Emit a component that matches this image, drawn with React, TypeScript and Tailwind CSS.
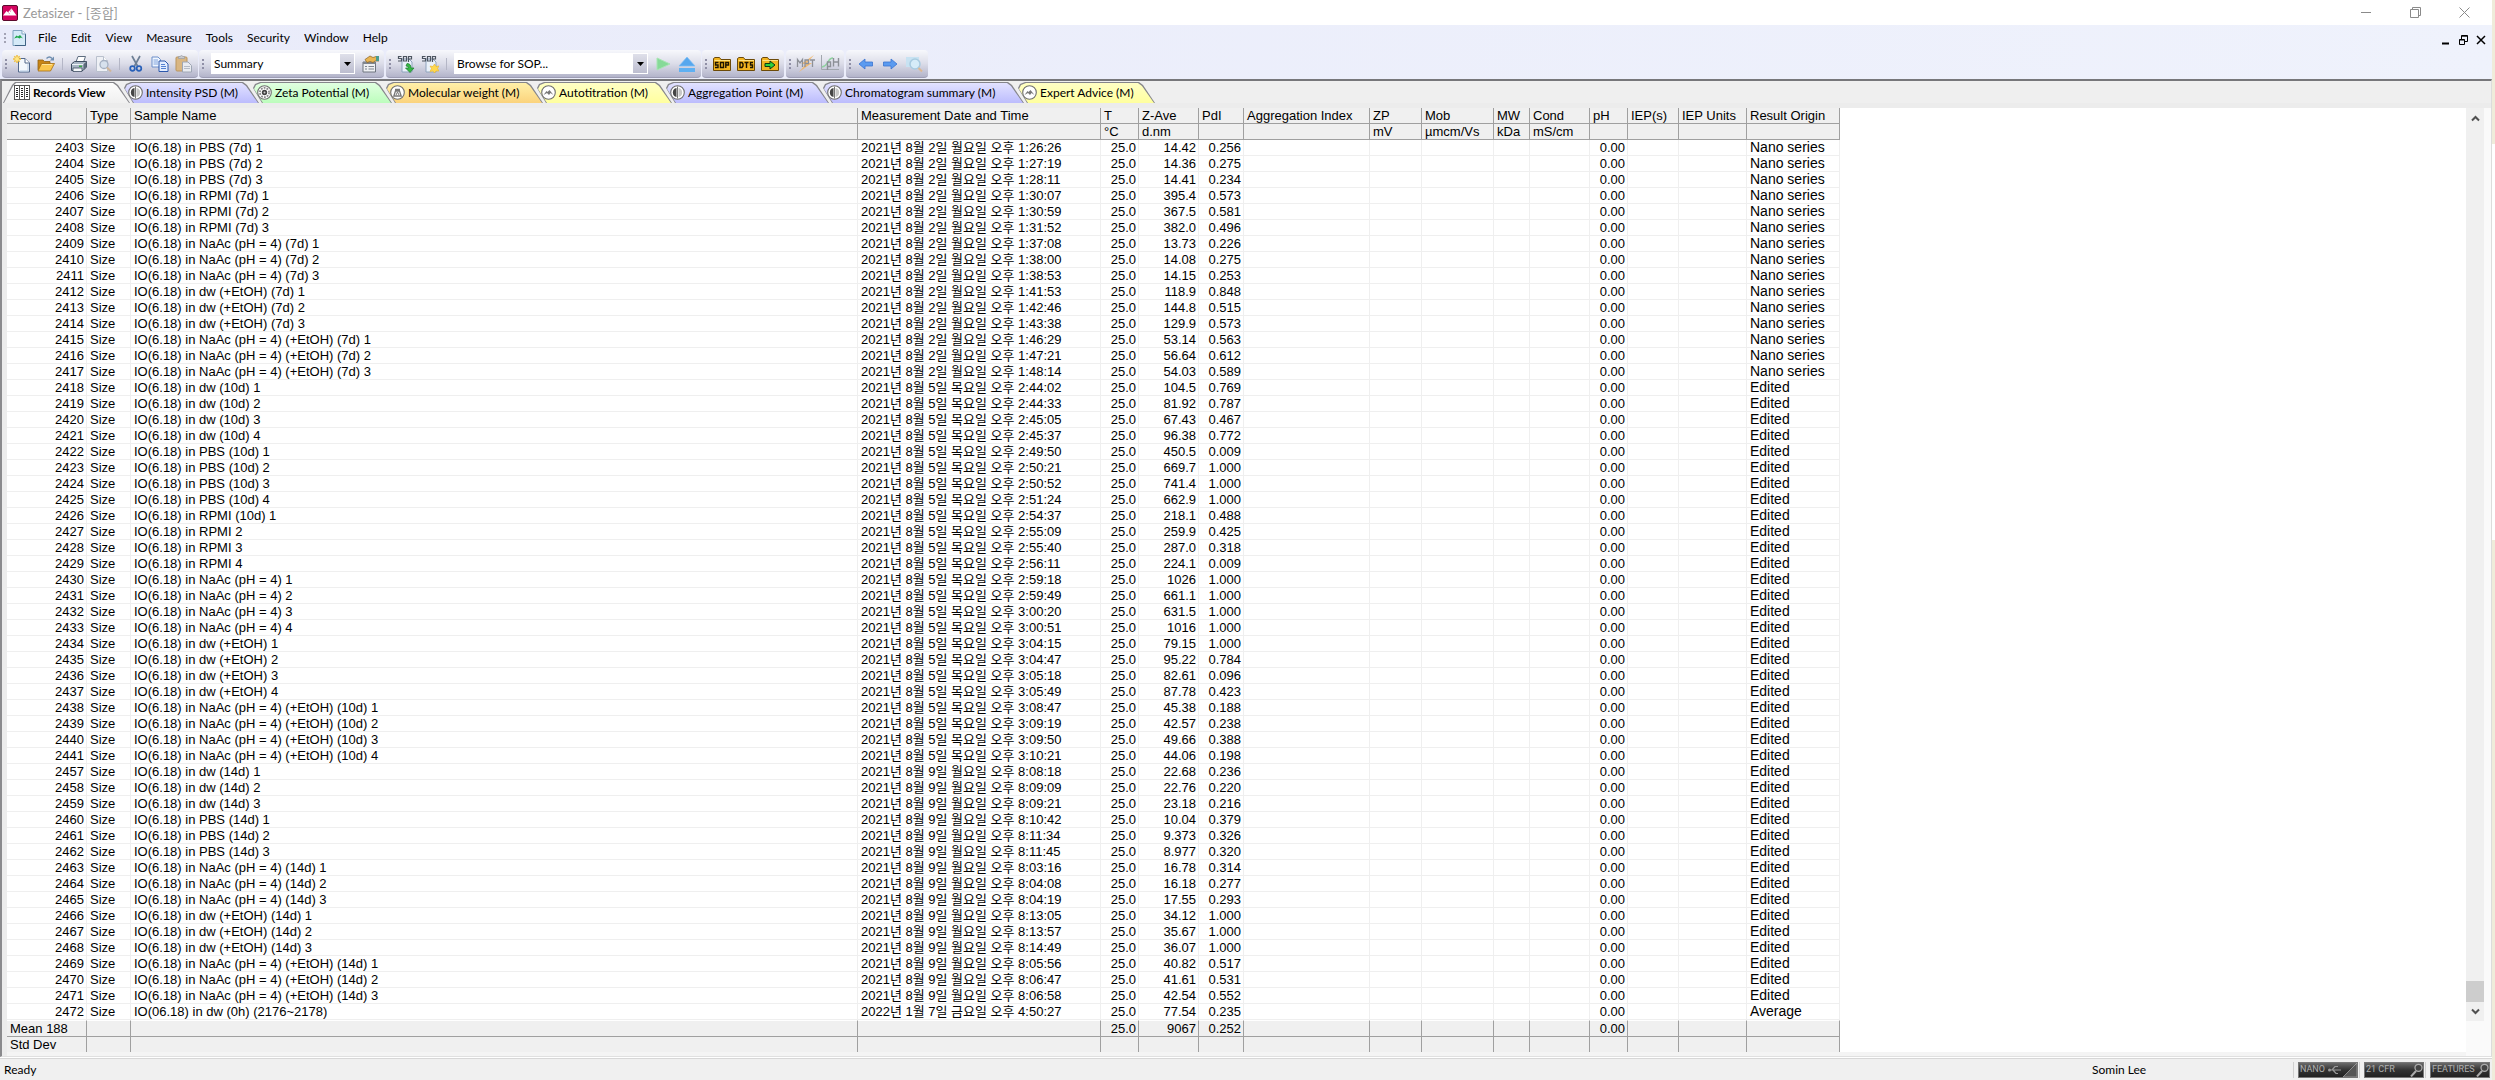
import React from "react";

const AUG2 = "2021년 8월 2일 월요일 오후 ";
const AUG5 = "2021년 8월 5일 목요일 오후 ";
const AUG9 = "2021년 8월 9일 월요일 오후 ";
const JAN7 = "2022년 1월 7일 금요일 오후 ";

type Row = [number, string, string, string, string, string];

const rows: Row[] = [
  [2403, "IO(6.18) in PBS (7d) 1", AUG2 + "1:26:26", "14.42", "0.256", "Nano series"],
  [2404, "IO(6.18) in PBS (7d) 2", AUG2 + "1:27:19", "14.36", "0.275", "Nano series"],
  [2405, "IO(6.18) in PBS (7d) 3", AUG2 + "1:28:11", "14.41", "0.234", "Nano series"],
  [2406, "IO(6.18) in RPMI (7d) 1", AUG2 + "1:30:07", "395.4", "0.573", "Nano series"],
  [2407, "IO(6.18) in RPMI (7d) 2", AUG2 + "1:30:59", "367.5", "0.581", "Nano series"],
  [2408, "IO(6.18) in RPMI (7d) 3", AUG2 + "1:31:52", "382.0", "0.496", "Nano series"],
  [2409, "IO(6.18) in NaAc (pH = 4) (7d) 1", AUG2 + "1:37:08", "13.73", "0.226", "Nano series"],
  [2410, "IO(6.18) in NaAc (pH = 4) (7d) 2", AUG2 + "1:38:00", "14.08", "0.275", "Nano series"],
  [2411, "IO(6.18) in NaAc (pH = 4) (7d) 3", AUG2 + "1:38:53", "14.15", "0.253", "Nano series"],
  [2412, "IO(6.18) in dw (+EtOH) (7d) 1", AUG2 + "1:41:53", "118.9", "0.848", "Nano series"],
  [2413, "IO(6.18) in dw (+EtOH) (7d) 2", AUG2 + "1:42:46", "144.8", "0.515", "Nano series"],
  [2414, "IO(6.18) in dw (+EtOH) (7d) 3", AUG2 + "1:43:38", "129.9", "0.573", "Nano series"],
  [2415, "IO(6.18) in NaAc (pH = 4) (+EtOH) (7d) 1", AUG2 + "1:46:29", "53.14", "0.563", "Nano series"],
  [2416, "IO(6.18) in NaAc (pH = 4) (+EtOH) (7d) 2", AUG2 + "1:47:21", "56.64", "0.612", "Nano series"],
  [2417, "IO(6.18) in NaAc (pH = 4) (+EtOH) (7d) 3", AUG2 + "1:48:14", "54.03", "0.589", "Nano series"],
  [2418, "IO(6.18) in dw (10d) 1", AUG5 + "2:44:02", "104.5", "0.769", "Edited"],
  [2419, "IO(6.18) in dw (10d) 2", AUG5 + "2:44:33", "81.92", "0.787", "Edited"],
  [2420, "IO(6.18) in dw (10d) 3", AUG5 + "2:45:05", "67.43", "0.467", "Edited"],
  [2421, "IO(6.18) in dw (10d) 4", AUG5 + "2:45:37", "96.38", "0.772", "Edited"],
  [2422, "IO(6.18) in PBS (10d) 1", AUG5 + "2:49:50", "450.5", "0.009", "Edited"],
  [2423, "IO(6.18) in PBS (10d) 2", AUG5 + "2:50:21", "669.7", "1.000", "Edited"],
  [2424, "IO(6.18) in PBS (10d) 3", AUG5 + "2:50:52", "741.4", "1.000", "Edited"],
  [2425, "IO(6.18) in PBS (10d) 4", AUG5 + "2:51:24", "662.9", "1.000", "Edited"],
  [2426, "IO(6.18) in RPMI (10d) 1", AUG5 + "2:54:37", "218.1", "0.488", "Edited"],
  [2427, "IO(6.18) in RPMI 2", AUG5 + "2:55:09", "259.9", "0.425", "Edited"],
  [2428, "IO(6.18) in RPMI 3", AUG5 + "2:55:40", "287.0", "0.318", "Edited"],
  [2429, "IO(6.18) in RPMI 4", AUG5 + "2:56:11", "224.1", "0.009", "Edited"],
  [2430, "IO(6.18) in NaAc (pH = 4) 1", AUG5 + "2:59:18", "1026", "1.000", "Edited"],
  [2431, "IO(6.18) in NaAc (pH = 4) 2", AUG5 + "2:59:49", "661.1", "1.000", "Edited"],
  [2432, "IO(6.18) in NaAc (pH = 4) 3", AUG5 + "3:00:20", "631.5", "1.000", "Edited"],
  [2433, "IO(6.18) in NaAc (pH = 4) 4", AUG5 + "3:00:51", "1016", "1.000", "Edited"],
  [2434, "IO(6.18) in dw (+EtOH) 1", AUG5 + "3:04:15", "79.15", "1.000", "Edited"],
  [2435, "IO(6.18) in dw (+EtOH) 2", AUG5 + "3:04:47", "95.22", "0.784", "Edited"],
  [2436, "IO(6.18) in dw (+EtOH) 3", AUG5 + "3:05:18", "82.61", "0.096", "Edited"],
  [2437, "IO(6.18) in dw (+EtOH) 4", AUG5 + "3:05:49", "87.78", "0.423", "Edited"],
  [2438, "IO(6.18) in NaAc (pH = 4) (+EtOH) (10d) 1", AUG5 + "3:08:47", "45.38", "0.188", "Edited"],
  [2439, "IO(6.18) in NaAc (pH = 4) (+EtOH) (10d) 2", AUG5 + "3:09:19", "42.57", "0.238", "Edited"],
  [2440, "IO(6.18) in NaAc (pH = 4) (+EtOH) (10d) 3", AUG5 + "3:09:50", "49.66", "0.388", "Edited"],
  [2441, "IO(6.18) in NaAc (pH = 4) (+EtOH) (10d) 4", AUG5 + "3:10:21", "44.06", "0.198", "Edited"],
  [2457, "IO(6.18) in dw (14d) 1", AUG9 + "8:08:18", "22.68", "0.236", "Edited"],
  [2458, "IO(6.18) in dw (14d) 2", AUG9 + "8:09:09", "22.76", "0.220", "Edited"],
  [2459, "IO(6.18) in dw (14d) 3", AUG9 + "8:09:21", "23.18", "0.216", "Edited"],
  [2460, "IO(6.18) in PBS (14d) 1", AUG9 + "8:10:42", "10.04", "0.379", "Edited"],
  [2461, "IO(6.18) in PBS (14d) 2", AUG9 + "8:11:34", "9.373", "0.326", "Edited"],
  [2462, "IO(6.18) in PBS (14d) 3", AUG9 + "8:11:45", "8.977", "0.320", "Edited"],
  [2463, "IO(6.18) in NaAc (pH = 4) (14d) 1", AUG9 + "8:03:16", "16.78", "0.314", "Edited"],
  [2464, "IO(6.18) in NaAc (pH = 4) (14d) 2", AUG9 + "8:04:08", "16.18", "0.277", "Edited"],
  [2465, "IO(6.18) in NaAc (pH = 4) (14d) 3", AUG9 + "8:04:19", "17.55", "0.293", "Edited"],
  [2466, "IO(6.18) in dw (+EtOH) (14d) 1", AUG9 + "8:13:05", "34.12", "1.000", "Edited"],
  [2467, "IO(6.18) in dw (+EtOH) (14d) 2", AUG9 + "8:13:57", "35.67", "1.000", "Edited"],
  [2468, "IO(6.18) in dw (+EtOH) (14d) 3", AUG9 + "8:14:49", "36.07", "1.000", "Edited"],
  [2469, "IO(6.18) in NaAc (pH = 4) (+EtOH) (14d) 1", AUG9 + "8:05:56", "40.82", "0.517", "Edited"],
  [2470, "IO(6.18) in NaAc (pH = 4) (+EtOH) (14d) 2", AUG9 + "8:06:47", "41.61", "0.531", "Edited"],
  [2471, "IO(6.18) in NaAc (pH = 4) (+EtOH) (14d) 3", AUG9 + "8:06:58", "42.54", "0.552", "Edited"],
  [2472, "IO(06.18) in dw (0h) (2176~2178)", JAN7 + "4:50:27", "77.54", "0.235", "Average"],
];

const columns = [
  { title: "Record", unit: "", width: "w-[80px]" },
  { title: "Type", unit: "", width: "w-[44px]" },
  { title: "Sample Name", unit: "", width: "w-[727px]" },
  { title: "Measurement Date and Time", unit: "", width: "w-[243px]" },
  { title: "T", unit: "°C", width: "w-[38px]" },
  { title: "Z-Ave", unit: "d.nm", width: "w-[60px]" },
  { title: "PdI", unit: "", width: "w-[45px]" },
  { title: "Aggregation Index", unit: "", width: "w-[126px]" },
  { title: "ZP", unit: "mV", width: "w-[52px]" },
  { title: "Mob", unit: "µmcm/Vs", width: "w-[72px]" },
  { title: "MW", unit: "kDa", width: "w-[36px]" },
  { title: "Cond", unit: "mS/cm", width: "w-[60px]" },
  { title: "pH", unit: "", width: "w-[38px]" },
  { title: "IEP(s)", unit: "", width: "w-[51px]" },
  { title: "IEP Units", unit: "", width: "w-[68px]" },
  { title: "Result Origin", unit: "", width: "w-[93px]" },
];

const numeric = [0, 4, 5, 6, 12];

/* ---------- icons ---------- */

function Svg({ children, size = 18 }: { children: React.ReactNode; size?: number }) {
  return (
    <svg width={size} height={size} viewBox="0 0 18 18" aria-hidden="true" className="shrink-0">
      {children}
    </svg>
  );
}

const AppLogo = () => (
  <svg width="16" height="16" viewBox="0 0 16 16" aria-hidden="true" className="shrink-0">
    <rect x=".5" y=".5" width="15" height="15" rx="1.5" fill="#d3045f" stroke="#5c0a2d" />
    <path d="M1 10.5 4.5 6 6 7.3 9.5 3.5 14.5 10.5Z" fill="#fff" />
    <path d="M6 7.3 8 9M9.5 3.5 8.3 7" stroke="#e67aa9" strokeWidth=".7" />
  </svg>
);

const DocLogo = () => (
  <svg width="14" height="16" viewBox="0 0 14 16" aria-hidden="true" className="shrink-0">
    <path d="M1 .5H10L13.5 4V15.5H1Z" fill="#d5eaf8" stroke="#7fa3c0" />
    <path d="M13.5 4V15.5H3" fill="none" stroke="#3f6384" />
    <path d="M10 .5V4H13.5" fill="#fff" stroke="#7fa3c0" />
    <path d="M2 8.5 4.5 5.5 6 6.5 8 5 11 8.5 9 7.5 7.5 8.5 5.5 7.5Z" fill="#1fa84b" />
  </svg>
);

const NewIcon = () => (
  <Svg>
    <path d="M5.5 3.5H12L16.5 8V17H5.5Z" fill="#f4f8fd" stroke="#53698c" />
    <path d="M12 3.500V8H16.500" fill="#fff" stroke="#53698c" />
    <path d="M15 9V16H7" fill="none" stroke="#b7cbe4" />
    <path d="M4 0V8M0 4H8M1.300 1.300 6.700 6.700M6.700 1.300 1.300 6.700" stroke="#f0bf3a" strokeWidth="1.500" />
    <circle cx="4" cy="4" r="2" fill="#ffe785" />
  </Svg>
);

const OpenIcon = () => (
  <Svg>
    <path d="M1 15V5H6L7.500 6.500H13V9" fill="#c98516" stroke="#8f5f14" strokeWidth=".8" />
    <path d="M1 16 4.500 8.500H17.500L13.500 16Z" fill="#fbc64d" stroke="#a46c12" strokeWidth=".8" />
    <path d="M5 9.500H15" stroke="#ffe49a" />
    <path d="M9.500 3.500Q12.500 .5 15 3.500" fill="none" stroke="#6f8eb0" strokeWidth="1.400" />
    <path d="M17 1.500V5.500H12.800Z" fill="#6f8eb0" />
  </Svg>
);

const PrintIcon = () => (
  <Svg>
    <path d="M6 7 8 1.500H15.500L13.500 7" fill="#fff" stroke="#5d6d80" />
    <path d="M1.500 9 4.500 6.500H16.500V12L13 15.500H1.500Z" fill="#a9b6c5" stroke="#3e4d60" />
    <path d="M2 9.500H13L16 7" fill="none" stroke="#eef3f8" />
    <path d="M13.500 9V15L16.500 12V6.500Z" fill="#5d6b7c" />
    <path d="M3 13H12V16.500H3Z" fill="#f4f7fa" stroke="#3e4d60" strokeWidth=".8" />
    <rect x="9" y="10.500" width="3" height="1.500" fill="#3aa845" />
  </Svg>
);

const PreviewIcon = () => (
  <Svg>
    <path d="M2.500 1.500H9.500L13.500 5.500V16.500H2.500Z" fill="#eef0f5" stroke="#b9c0cd" />
    <path d="M9.500 1.500V5.500H13.500" fill="#fff" stroke="#b9c0cd" />
    <circle cx="10" cy="9.500" r="4" fill="#d7e1ed" stroke="#a5b0c2" strokeWidth="1.300" />
    <path d="M13 12.500 17 16.500" stroke="#cfb69b" strokeWidth="2" />
  </Svg>
);

const CutIcon = () => (
  <Svg>
    <path d="M5 1 10.500 11M13 1 7.500 11" stroke="#6d7f95" strokeWidth="1.700" />
    <circle cx="5.500" cy="13.500" r="2.300" fill="none" stroke="#2860b8" strokeWidth="1.700" />
    <circle cx="12" cy="13.500" r="2.300" fill="none" stroke="#2860b8" strokeWidth="1.700" />
  </Svg>
);

const CopyIcon = () => (
  <Svg>
    <path d="M1 2H7L9.500 4.500V12H1Z" fill="#f0f6ff" stroke="#6c8fca" />
    <path d="M2.500 5H7M2.500 7H7M2.500 9H7" stroke="#7ea2dc" />
    <path d="M8 6H14L17 9V16.500H8Z" fill="#e4eeff" stroke="#2d58ac" />
    <path d="M10 9.500H14M10 11.500H15M10 13.500H15" stroke="#5582d2" />
  </Svg>
);

const PasteIcon = () => (
  <Svg>
    <rect x="1" y="2" width="11" height="14" rx="1" fill="#d9b682" stroke="#b99560" />
    <path d="M3.500 3.500H9.500V1.500H8L6.500 .5 5 1.500H3.500Z" fill="#c7c9ce" stroke="#9a9ca3" strokeWidth=".7" />
    <path d="M7.500 7H13L16.500 10.500V17H7.500Z" fill="#e9ebf0" stroke="#9ea6b4" />
    <path d="M9 11.500H15M9 13.500H15" stroke="#b5bbc6" />
  </Svg>
);

const PropsIcon = () => (
  <Svg>
    <path d="M2 7H14.500V17H2Z" fill="#eef0f3" stroke="#6e747e" />
    <path d="M2 7H14.500V9H2Z" fill="#80868f" />
    <path d="M4 11.500H6M4 14H6M7.500 11.500H13M7.500 14H13" stroke="#7f858f" />
    <path d="M4 4.500 9 1 12 2.500 15 1.500H18V6H14L12 7.500 9 6.500 6 7.500Z" fill="#e9b552" stroke="#8a6320" strokeWidth=".7" />
    <rect x="15" y="1" width="3" height="5" fill="#4a9b8f" />
  </Svg>
);

const SopDoc = ({ star }: { star?: boolean }) => (
  <Svg>
    <path d="M5 4H12L15 7V17H5Z" fill="#eaf1fa" stroke="#8fa3bd" />
    <path d="M4.500 1.500H1.500V3.500H4.500V6H1M6.500 1.500H9.500V6H6.500ZM11.500 7V1.500H14.500V4H12" stroke="#4c5560" strokeWidth="1.200" fill="none" />
    {star ? (
      <path d="M13.500 9 15 11.500 18 11 16.500 13.500 18 16 15 16 13.500 18 12 16 9 16.500 10.500 13.500 9 11 12 11.500Z" fill="#ffd84f" stroke="#e6b52d" strokeWidth=".6" />
    ) : (
      <path d="M10 8.500Q14 8.500 14 13H17L13 17.500 8.500 13H11.500Q11.500 11 9 11Z" fill="#35b845" stroke="#1c7c2b" strokeWidth=".7" />
    )}
  </Svg>
);

const PlayIcon = () => (
  <Svg>
    <path d="M3 3 16 9 3 15Z" fill="#86da98" stroke="#a8e5b4" strokeLinejoin="round" />
  </Svg>
);

const EjectIcon = () => (
  <Svg>
    <path d="M9 2 17 11H1Z" fill="#56a7ee" stroke="#7fc0f5" strokeWidth=".7" />
    <rect x="1" y="13" width="16" height="4" fill="#5fb0f2" />
  </Svg>
);

const Folder = ({ children }: { children: React.ReactNode }) => (
  <Svg>
    <path d="M.5 15.500V3.500L2 2.500H6.500L8 4.500H17.500V15.500Z" fill="#f2b41f" stroke="#6c4a08" />
    <path d="M1.500 5.500H17" stroke="#ffe07a" />
    {children}
  </Svg>
);

const SopFolder = () => (
  <Folder>
    <path d="M5.500 7.500H2.500V10H5V12.500H2M7.500 7.500H10.500V12.500H7.500ZM12.800 13V7.500H15.500V10H13" fill="none" stroke="#1d1500" strokeWidth="1.400" />
  </Folder>
);
const DtsFolder = () => (
  <Folder>
    <path d="M3 7.500V12.500H5L6 11V9L5 7.500ZM7.500 7.500H11.500M9.500 7.500V13M16 7.500H13.500V10H15.500V12.500H13" fill="none" stroke="#1d1500" strokeWidth="1.400" />
  </Folder>
);
const ArrowFolder = () => (
  <Folder>
    <path d="M4 8.500H9V6L14 10 9 14V11.500H4Z" fill="#2fd23d" stroke="#0d3d10" />
  </Folder>
);

const MptIcon = () => (
  <svg width="20" height="18" viewBox="0 0 20 18" aria-hidden="true">
    <path d="M18 0 5 9H10L3 17 16 8H11Z" fill="#f7b55e" opacity=".85" />
    <path d="M1.500 12V4.500L4 8 6.500 4.500V12M9 12V5H12.500V8.500H9M14 5H19M16.500 5V12" fill="none" stroke="#8d9097" strokeWidth="1.300" />
  </svg>
);

const PhIcon = () => (
  <svg width="20" height="18" viewBox="0 0 20 18" aria-hidden="true">
    <path d="M1.500 0V14.500H19" fill="none" stroke="#a2a7ae" />
    <path d="M2 12Q6 11 8 7T13 3" fill="none" stroke="#8fd29f" strokeWidth="1.600" />
    <path d="M7.500 15V7H10.500V11.500H7.500M13.500 11.500V3M18.500 11.500V3M13.500 7H18.500" fill="none" stroke="#8d9097" strokeWidth="1.400" />
  </svg>
);

const BackIcon = () => (
  <Svg>
    <path d="M2 9 8 4V7H15.500V11H8V14Z" fill="#5b9bf0" stroke="#3a73d0" strokeWidth=".8" strokeLinejoin="round" />
  </Svg>
);
const ForwardIcon = () => (
  <Svg>
    <path d="M16 9 10 4V7H2.500V11H10V14Z" fill="#5b9bf0" stroke="#3a73d0" strokeWidth=".8" strokeLinejoin="round" />
  </Svg>
);
const FindIcon = () => (
  <Svg>
    <rect x="1" y="2" width="13" height="10" fill="#c8e2f2" />
    <circle cx="10" cy="9" r="5" fill="#d6ecf8" stroke="#a8cbe0" strokeWidth="1.500" />
    <path d="M13.500 13 17 16.500" stroke="#dcb893" strokeWidth="2" />
  </Svg>
);

const GridIcon = () => (
  <svg width="16" height="15" viewBox="0 0 16 15" aria-hidden="true" className="shrink-0">
    <rect x=".5" y=".5" width="15" height="14" fill="#fff" stroke="#555" />
    <path d="M5.500 0V15M10.500 0V15" stroke="#555" />
    <path d="M2 3.500H4M2 5.500H4M2 7.500H4M2 9.500H4M2 11.500H4M7 3.500H9M7 5.500H9M7 7.500H9M7 9.500H9M7 11.500H9M12 3.500H14M12 5.500H14M12 7.500H14M12 9.500H14M12 11.500H14" stroke="#222" />
  </svg>
);

const Disc = ({ children }: { children: React.ReactNode }) => (
  <svg width="15" height="15" viewBox="0 0 15 15" aria-hidden="true" className="shrink-0">
    <circle cx="7.500" cy="7.500" r="6.800" fill="#fff" stroke="#6f6f6f" strokeWidth="1.100" />
    {children}
  </svg>
);
const HalfDisc = () => (
  <Disc>
    <path d="M6.500 3A4.600 4.600 0 0 0 6.500 12Z" fill="#444" />
    <path d="M8.500 3A4.600 4.600 0 0 1 8.500 12Z" fill="#c9c9c9" />
    <path d="M7.500 1.500V13.500" stroke="#777" />
  </Disc>
);
const ZetaDisc = () => (
  <Disc>
    <circle cx="7.500" cy="7.500" r="4.600" fill="none" stroke="#8a8a8a" strokeWidth="1.800" strokeDasharray="1.800 1.100" />
    <circle cx="7.500" cy="7.500" r="2.700" fill="#444" />
    <circle cx="7.500" cy="7.500" r="1" fill="#ccc" />
  </Disc>
);
const WeightDisc = () => (
  <Disc>
    <path d="M5 4.500H10M3.800 11H11.200L9.500 6H5.500Z" fill="none" stroke="#777" strokeWidth="1.300" />
    <path d="M6 10 7.500 7 9 10" fill="none" stroke="#777" />
  </Disc>
);
const HillDisc = () => (
  <Disc>
    <path d="M2.500 10 5.500 6 6.500 7 8.500 5 12.500 10 9.500 8 8 10 6 8Z" fill="#777" />
  </Disc>
);

/* ---------- toolbar ---------- */

function Group({ children, label, className = "" }: { children: React.ReactNode; label: string; className?: string }) {
  return (
    <div
      role="toolbar"
      aria-label={label}
      className={
        "flex h-7 items-center rounded-sm border-b border-[#9c9cb4] bg-linear-to-b from-[#f7f8fc] via-[#dcdde9] to-[#b3b4ca] pr-0.5 " +
        className
      }
    >
      <span className="flex w-2 shrink-0 flex-col items-center gap-0.5">
        <span className="size-0.5 bg-[#8f8fa6]" />
        <span className="size-0.5 bg-[#8f8fa6]" />
        <span className="size-0.5 bg-[#8f8fa6]" />
      </span>
      {children}
    </div>
  );
}

const Tool = ({ label, children }: { label: string; children: React.ReactNode }) => (
  <button type="button" aria-label={label} className="flex size-6 shrink-0 items-center justify-center">
    {children}
  </button>
);

const Sep = () => (
  <span className="flex w-[9px] shrink-0 justify-center">
    <span className="h-3 w-px bg-[#b4b6c6]" />
  </span>
);

function Combo({ label, value, className }: { label: string; value: string; className: string }) {
  return (
    <div className={"relative h-[21px] shrink-0 bg-white " + className}>
      <select aria-label={label} className="block h-full w-full appearance-none bg-transparent pl-[3px] text-xs text-black outline-none">
        <option>{value}</option>
      </select>
      <span className="pointer-events-none absolute inset-y-px right-px flex w-[14px] items-center justify-center bg-linear-to-b from-[#dfe0ea] to-[#bcbdcf]">
        <svg width="7" height="4" viewBox="0 0 7 4" aria-hidden="true">
          <path d="M0 0H7L3.500 4Z" fill="#000" />
        </svg>
      </span>
    </div>
  );
}

/* ---------- tabs ---------- */

const tabs = [
  { label: "Intensity PSD (M)", icon: <HalfDisc />, box: "z-[7] w-[137px]", fill: "from-[#e2e2ff] to-[#bcbcfd]" },
  { label: "Zeta Potential (M)", icon: <ZetaDisc />, box: "z-[6] w-[141px]", fill: "from-[#e0ffe0] to-[#bcfdbc]" },
  { label: "Molecular weight (M)", icon: <WeightDisc />, box: "z-[5] w-[159px]", fill: "from-[#fff0a8] to-[#fbd37c]" },
  { label: "Autotitration (M)", icon: <HillDisc />, box: "z-[4] w-[137px]", fill: "from-[#ffffc4] to-[#ffff9e]" },
  { label: "Aggregation Point (M)", icon: <HalfDisc />, box: "z-[3] w-[165px]", fill: "from-[#e2e2ff] to-[#bcbcfd]" },
  { label: "Chromatogram summary (M)", icon: <HalfDisc />, box: "z-[2] w-[203px]", fill: "from-[#e2e2ff] to-[#bcbcfd]" },
  { label: "Expert Advice (M)", icon: <HillDisc />, box: "z-[1] w-[139px]", fill: "from-[#ffffc4] to-[#ffff9e]" },
];

const TAB_CLIP =
  "[clip-path:polygon(9px_0,calc(100%-16px)_0,calc(100%-12px)_3px,100%_100%,11px_100%,2px_6px,4px_2px)]";
const FIRST_CLIP = "[clip-path:polygon(12px_0,calc(100%-16px)_0,calc(100%-12px)_3px,100%_100%,0_100%,9px_3px)]";

function TabShape({ clip, fill }: { clip: string; fill: string }) {
  return (
    <span className={"absolute inset-0 bg-[#85858a] " + clip}>
      <span className={"absolute inset-x-px top-px bottom-0 bg-linear-to-b " + fill + " " + clip} />
    </span>
  );
}

/* ---------- status badges ---------- */

const Badge = ({ text, children }: { text: string; children: React.ReactNode }) => (
  <div className="flex items-center border-l border-[#d0d0d0] pl-1">
    <div className="flex h-4 w-[60px] items-center justify-between overflow-hidden border border-[#777] bg-linear-to-b from-[#6a6a6a] via-[#333] to-[#222] pl-px font-['Roboto',sans-serif] text-[9px] leading-none text-[#b0b0b0]">
      <span>{text}</span>
      {children}
    </div>
  </div>
);

const KeyIcon = () => (
  <svg width="13" height="14" viewBox="0 0 13 14" aria-hidden="true" className="shrink-0">
    <path d="M1 13.500 6 8" stroke="#aaa" strokeWidth="2" />
    <circle cx="8.500" cy="4.800" r="3.500" fill="#444" stroke="#aaa" strokeWidth="1.300" />
  </svg>
);

const UsbIcon = () => (
  <svg width="30" height="14" viewBox="0 0 30 14" aria-hidden="true" className="shrink-0">
    <path d="M2 7H14M5 7 8 3.500H11M6 7 9 10.500H11" fill="none" stroke="#999" strokeWidth="1.200" />
    <circle cx="2.500" cy="7" r="1.500" fill="#999" />
    <path d="M16 14 30 0V14Z" fill="#555" stroke="#aaa" strokeWidth=".7" />
  </svg>
);

function bodyCell(row: Row, index: number) {
  switch (index) {
    case 0: return row[0];
    case 1: return "Size";
    case 2: return row[1];
    case 3: return row[2];
    case 4: return "25.0";
    case 5: return row[3];
    case 6: return row[4];
    case 12: return "0.00";
    case 15: return row[5];
    default: return "";
  }
}

const means: Record<number, string> = { 0: "Mean 188", 4: "25.0", 5: "9067", 6: "0.252", 12: "0.00" };

const align = (i: number) => (numeric.includes(i) ? "text-right pr-0.5 pl-0" : "text-left pl-[3px] pr-0");

export default function App() {
  return (
    <div className="flex min-h-screen bg-white font-['Lato','Noto_Sans_CJK_KR',sans-serif] text-xs text-black">
      <div className="flex min-w-0 flex-1 flex-col bg-[#f0f0f0]">
        {/* title bar */}
        <header className="flex h-[25px] items-center bg-white pl-0.5">
          <AppLogo />
          <h1 className="pl-[5px] text-[13px] leading-4 text-[#999]">Zetasizer - [종합]</h1>
          <div className="mr-[3px] ml-auto flex text-[#8a8a8a]">
            <button type="button" aria-label="Minimize" className="flex h-6 w-[49px] items-center justify-center">
              <svg width="11" height="11" viewBox="0 0 11 11"><path d="M0 5.500H10" stroke="currentColor" /></svg>
            </button>
            <button type="button" aria-label="Restore" className="flex h-6 w-[49px] items-center justify-center">
              <svg width="11" height="11" viewBox="0 0 11 11" fill="none" stroke="currentColor"><path d="M.5 2.500H8.500V10.500H.5ZM2.500 2.500V.5H10.500V8.500H8.500" /></svg>
            </button>
            <button type="button" aria-label="Close" className="flex h-6 w-[49px] items-center justify-center">
              <svg width="11" height="11" viewBox="0 0 11 11" stroke="currentColor"><path d="M.5 .5 10.500 10.500M10.500 .5 .5 10.500" /></svg>
            </button>
          </div>
        </header>

        {/* menu bar */}
        <nav aria-label="Menu" className="flex h-[25px] items-center bg-linear-to-r from-[#e9ebfa] to-[#eff2fc] pl-1">
          <span className="flex w-0.5 flex-col gap-0.5">
            <span className="size-0.5 bg-[#a3a3b5]" />
            <span className="size-0.5 bg-[#a3a3b5]" />
            <span className="size-0.5 bg-[#a3a3b5]" />
          </span>
          <span className="pr-[5px] pl-1.5"><DocLogo /></span>
          {["File", "Edit", "View", "Measure", "Tools", "Security", "Window", "Help"].map((item) => (
            <button key={item} type="button" className="px-[7px] leading-4">{item}</button>
          ))}
          <div className="mr-[2px] ml-auto flex pt-1">
            <button type="button" aria-label="Minimize document" className="flex w-[18px] justify-center">
              <svg width="9" height="10" viewBox="0 0 9 10"><path d="M1 8.500H8" stroke="#000" strokeWidth="2" /></svg>
            </button>
            <button type="button" aria-label="Restore document" className="flex w-[18px] justify-center">
              <svg width="9" height="10" viewBox="0 0 9 10" fill="none" stroke="#000"><path d="M.5 4.500H5.500V9.500H.5ZM.5 5H5.500M2.500 4.500V.5H8.500V6.500H5.500M2.500 1.200H8.500" /></svg>
            </button>
            <button type="button" aria-label="Close document" className="flex w-[18px] justify-center">
              <svg width="10" height="10" viewBox="0 0 10 10"><path d="M1 1 9 9M9 1 1 9" stroke="#000" strokeWidth="1.500" /></svg>
            </button>
          </div>
        </nav>

        {/* toolbars */}
        <div className="flex h-[29px] items-start bg-linear-to-r from-[#e9ebfa] to-[#eff2fc] pl-0.5">
          <Group label="Standard">
            <Tool label="New"><NewIcon /></Tool>
            <Tool label="Open"><OpenIcon /></Tool>
            <Sep />
            <Tool label="Print"><PrintIcon /></Tool>
            <Tool label="Print preview"><PreviewIcon /></Tool>
            <Sep />
            <Tool label="Cut"><CutIcon /></Tool>
            <Tool label="Copy"><CopyIcon /></Tool>
            <Tool label="Paste"><PasteIcon /></Tool>
          </Group>
          <Group label="Workspace" className="ml-px">
            <Combo label="Workspace" value="Summary" className="ml-1 mr-[3px] w-36" />
            <Tool label="Workspace settings"><PropsIcon /></Tool>
          </Group>
          <Group label="SOP" className="ml-0.5">
            <Tool label="Edit SOP"><SopDoc /></Tool>
            <Tool label="New SOP"><SopDoc star /></Tool>
            <Sep />
            <Combo label="SOP" value="Browse for SOP..." className="mx-[3px] w-[194px]" />
            <Tool label="Start"><PlayIcon /></Tool>
            <Tool label="Eject"><EjectIcon /></Tool>
          </Group>
          <Group label="Folders" className="ml-px">
            <Tool label="SOP folder"><SopFolder /></Tool>
            <Tool label="DTS folder"><DtsFolder /></Tool>
            <Tool label="Export folder"><ArrowFolder /></Tool>
          </Group>
          <Group label="Titrator" className="ml-0.5">
            <Tool label="MPT"><MptIcon /></Tool>
            <Tool label="pH"><PhIcon /></Tool>
          </Group>
          <Group label="Navigate" className="ml-0.5">
            <Tool label="Previous"><BackIcon /></Tool>
            <Tool label="Next"><ForwardIcon /></Tool>
            <Tool label="Find"><FindIcon /></Tool>
          </Group>
        </div>

        {/* document window */}
        <main className="flex flex-1 flex-col border-t-2 border-r border-b border-l-2 border-t-[#77777a] border-r-[#dcdcdc] border-b-[#e0e0e0] border-l-[#8a8a8d] pt-px">
          <div role="tablist" className="flex h-[21px] bg-[#efefef] pl-px text-xs">
            <button role="tab" aria-selected="true" type="button" className="relative z-[8] w-[127px]">
              <TabShape clip={FIRST_CLIP} fill="from-[#fdfdfd] to-[#f0f0f0]" />
              <span className="relative flex items-center gap-[3px] pl-[11px] font-bold"><GridIcon />Records View</span>
            </button>
            {tabs.map((tab) => (
              <button key={tab.label} role="tab" aria-selected="false" type="button" className={"relative -ml-2 " + tab.box}>
                <TabShape clip={TAB_CLIP} fill={tab.fill} />
                <span className="relative flex items-center gap-[3px] pl-1.5 whitespace-nowrap">{tab.icon}{tab.label}</span>
              </button>
            ))}
          </div>

          <div className="flex flex-1 bg-[#ececec] pt-[5px] pl-[5px]">
            <div className="min-w-0 flex-1 bg-white">
              <table className="w-[1833px] table-fixed border-separate border-spacing-0 font-['Liberation_Sans','Noto_Sans_CJK_KR',sans-serif] text-[13px] leading-[15px] whitespace-nowrap">
                <colgroup>
                  {columns.map((c) => <col key={c.title} className={c.width} />)}
                </colgroup>
                <thead className="bg-[#f0f0f0]">
                  <tr>
                    {columns.map((c) => (
                      <th key={c.title} scope="col" className="h-4 overflow-hidden border-r border-b border-[#a0a0a0] py-0 pr-0 pl-[3px] text-left font-normal">{c.title}</th>
                    ))}
                  </tr>
                  <tr>
                    {columns.map((c) => (
                      <td key={c.title} className="h-4 overflow-hidden border-r border-b border-[#a0a0a0] py-0 pr-0 pl-[3px]">{c.unit}</td>
                    ))}
                  </tr>
                </thead>
                <tbody>
                  {rows.map((row) => (
                    <tr key={row[0]}>
                      {columns.map((c, i) => (
                        <td key={c.title} className={"h-4 overflow-hidden border-r border-b border-[#efefef] py-0 " + (i === 15 ? "text-sm leading-[15px] " : "") + align(i)}>
                          {bodyCell(row, i)}
                        </td>
                      ))}
                    </tr>
                  ))}
                </tbody>
                <tfoot>
                  <tr>
                    {columns.map((c, i) => (
                      <td key={c.title} className={"h-[17px] overflow-hidden border-t border-r border-b border-[#a0a0a0] border-t-white bg-[#f0f0f0] py-0 " + (i === 0 ? "pl-[3px]" : align(i))}>
                        {means[i]}
                      </td>
                    ))}
                  </tr>
                  <tr>
                    {columns.map((c, i) => (
                      <td key={c.title} className="h-[15px] overflow-hidden border-r border-[#a0a0a0] bg-[#f0f0f0] py-0 pl-[3px]">
                        {i === 0 ? "Std Dev" : ""}
                      </td>
                    ))}
                  </tr>
                </tfoot>
              </table>
              <div className="h-1 bg-[#f4f4f4]" />
            </div>
            <div className="flex flex-col bg-[#fafafa] pr-[7px] pb-[35px]">
              <div className="flex w-[18px] flex-1 flex-col items-center bg-[#f0f0f0]">
                <button type="button" aria-label="Scroll up" className="flex h-5 w-full items-center justify-center">
                  <svg width="9" height="7" viewBox="0 0 9 7"><path d="M1 5.500 4.500 2 8 5.500" fill="none" stroke="#505050" strokeWidth="2" /></svg>
                </button>
                <div className="mt-auto h-[21px] w-full bg-[#cdcdcd]" />
                <button type="button" aria-label="Scroll down" className="flex h-[19px] w-full items-center justify-center">
                  <svg width="9" height="7" viewBox="0 0 9 7"><path d="M1 1.500 4.500 5 8 1.500" fill="none" stroke="#505050" strokeWidth="2" /></svg>
                </button>
              </div>
            </div>
          </div>
        </main>

        {/* status bar */}
        <footer className="flex h-[23px] items-center border-t border-white">
          <div className="flex h-full w-full items-center border-t border-[#d7d7d7] pr-[2px] pl-1">
            <span>Ready</span>
            <span className="ml-auto w-[201px]">Somin Lee</span>
            <div className="flex gap-px">
              <Badge text="NANO"><UsbIcon /></Badge>
              <Badge text="21 CFR"><KeyIcon /></Badge>
              <Badge text="FEATURES"><KeyIcon /></Badge>
            </div>
          </div>
        </footer>
      </div>

      {/* desktop edge */}
      <div className="flex w-[3px] shrink-0 flex-col justify-between">
        <div className="h-36 bg-[#efecda]" />
        <div className="h-1/2 bg-[#efecda]" />
      </div>
    </div>
  );
}
